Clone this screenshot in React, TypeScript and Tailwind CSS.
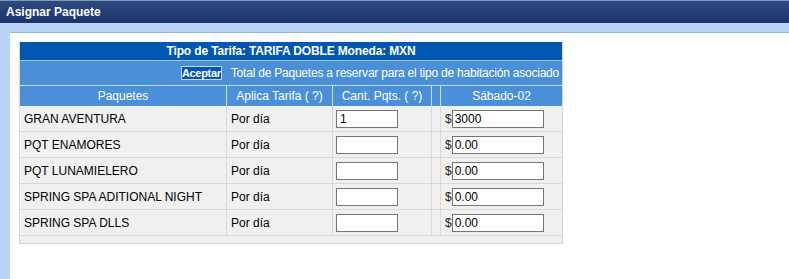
import React from "react";

const rows = [
  { name: "GRAN AVENTURA", qty: "1", price: "3000" },
  { name: "PQT ENAMORES", qty: "", price: "0.00" },
  { name: "PQT LUNAMIELERO", qty: "", price: "0.00" },
  { name: "SPRING SPA ADITIONAL NIGHT", qty: "", price: "0.00" },
  { name: "SPRING SPA DLLS", qty: "", price: "0.00" },
];

export default function App() {
  return (
    <div
      className="w-[789px] h-[279px] bg-white flex flex-col overflow-hidden text-[12px] text-black"
      style={{ fontFamily: '"Liberation Sans", Arial, sans-serif' }}
    >
      <div className="h-[23px] shrink-0 border-t border-[#8796b3] bg-gradient-to-b from-[#2b4a82] to-[#1b3569] flex items-center pl-[6px]">
        <span className="text-white font-bold text-[12px] leading-none">Asignar Paquete</span>
      </div>
      <div className="flex flex-1">
        <div className="w-[10px] shrink-0 bg-[#b8d3f5]" />
        <div className="flex-1 flex flex-col">
          <div className="h-[10px] shrink-0 bg-[#b8d3f5] border-b border-[#8fb8ec]" />
          <div className="flex-1 bg-white pl-[9px] pt-[9px]">
            <div className="w-[544px] border border-[#d6d6d6] border-t-0 bg-[#f0f0f0]">
              <div className="h-[19px] bg-[#0058b2] flex items-center justify-center text-white font-bold tracking-[-0.15px] border-b border-[#9cc0e8]">
                Tipo de Tarifa: TARIFA DOBLE Moneda: MXN
              </div>
              <div className="h-[25px] bg-[#4a90d9] flex items-center justify-end gap-[9px] pr-[3px] text-white border-b border-[#c5d8ef]">
                <button className="h-[14px] w-[41px] bg-[#0056b6] border border-[#c9d9ee] text-white font-bold text-[11px] tracking-[-0.3px] leading-none flex items-center justify-center">
                  Aceptar
                </button>
                <span className="whitespace-nowrap tracking-[-0.22px]">Total de Paquetes a reservar para el tipo de habitación asociado</span>
              </div>
              <div className="h-[20px] bg-[#4a90d9] flex text-white">
                <div className="w-[207px] flex items-center justify-center border-r border-[#d0dff0]">Paquetes</div>
                <div className="w-[106px] flex items-center justify-center border-r border-[#d0dff0]">Aplica Tarifa ( ?)</div>
                <div className="w-[99px] flex items-center justify-center border-r border-[#d0dff0]">Cant. Pqts. ( ?)</div>
                <div className="w-[9px] border-r border-[#d0dff0]" />
                <div className="flex-1 flex items-center justify-center">Sábado-02</div>
              </div>
              {rows.map((r) => (
                <div key={r.name} className="h-[26px] flex border-b border-[#d9d9d9]">
                  <div className="w-[207px] border-r border-[#d9d9d9] pl-[4px] pt-[4px] whitespace-nowrap">{r.name}</div>
                  <div className="w-[106px] border-r border-[#d9d9d9] pl-[4px] pt-[4px]">Por día</div>
                  <div className="w-[99px] border-r border-[#d9d9d9] pl-[3px] pt-[4px]">
                    <input
                      readOnly
                      value={r.qty}
                      className="w-[62px] h-[18px] bg-white border border-[#767676] px-[3px] text-[12px] text-black outline-none"
                      style={{ fontFamily: '"Liberation Sans", Arial, sans-serif' }}
                    />
                  </div>
                  <div className="w-[9px] border-r border-[#d9d9d9]" />
                  <div className="flex-1 flex items-start pl-[4px] pt-[4px]">
                    <span className="leading-[18px] text-[#222]">$</span>
                    <input
                      readOnly
                      value={r.price}
                      className="w-[92px] h-[18px] bg-white border border-[#767676] px-[2px] text-[12px] text-black outline-none"
                      style={{ fontFamily: '"Liberation Sans", Arial, sans-serif' }}
                    />
                  </div>
                </div>
              ))}
              <div className="h-[7px]" />
            </div>
          </div>
        </div>
      </div>
    </div>
  );
}
